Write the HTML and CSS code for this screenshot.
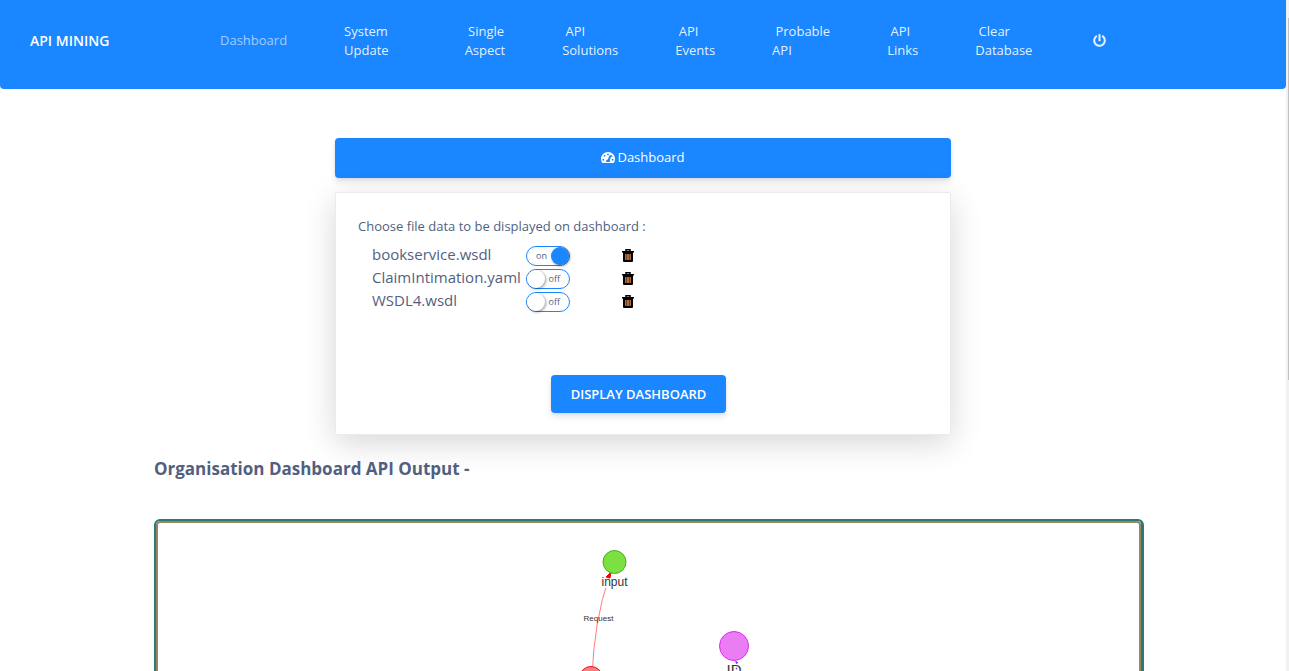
FILE: index.html
```html
<!DOCTYPE html>
<html lang="en">
<head>
<meta charset="utf-8">
<title>API Mining</title>
<link rel="stylesheet" href="styles.css">
</head>
<body>
<div class="page">
  <header class="navbar">
    <a class="brand" href="#">API MINING</a>
    <nav class="nav">
      <a class="nav-link current" href="#">Dashboard</a>
      <a class="nav-link wide" href="#">System<br>Update</a>
      <a class="nav-link" href="#">&nbsp;Single<br>Aspect</a>
      <a class="nav-link" href="#">&nbsp;API<br>Solutions</a>
      <a class="nav-link" href="#">&nbsp;API<br>Events</a>
      <a class="nav-link" href="#">&nbsp;Probable<br>API</a>
      <a class="nav-link" href="#">&nbsp;API<br>Links</a>
      <a class="nav-link" href="#">&nbsp;Clear<br>Database</a>
      <a class="nav-link power" href="#" aria-label="Log out">
        <svg width="13" height="13" viewBox="0 0 512 512"><path fill="currentColor" d="M400 54.100c63 45 104 118.600 104 201.900 0 136.800-110.800 247.700-247.500 248C120 504.300 8.200 393 8 256.400 7.900 173.100 48.900 99.300 111.800 54.200c11.700-8.300 28-4.800 35 7.700L162.600 90c5.900 10.500 3.100 23.800-6.600 31-41.500 30.800-68 79.600-68 134.900-.1 92.300 74.500 168.100 168 168.100 91.600 0 168.600-74.200 168-169.100-.3-51.800-24.700-101.800-68.100-134-9.700-7.200-12.400-20.500-6.500-30.900l15.800-28.100c7-12.400 23.200-16.100 34.800-7.800zM296 264V24c0-13.300-10.700-24-24-24h-32c-13.300 0-24 10.700-24 24v240c0 13.300 10.700 24 24 24h32c13.300 0 24-10.700 24-24z"/></svg>
      </a>
    </nav>
  </header>

  <main>
    <section class="chooser">
      <h1 class="banner">
        <svg width="14" height="13" viewBox="0 0 576 512"><path fill="currentColor" fill-rule="evenodd" d="M288 32C129 32 0 161 0 320c0 53 14 102 39 145 6 10 16 15 28 15h442c12 0 22-5 28-15 25-43 39-92 39-145C576 161 447 32 288 32zM288 88a38 38 0 1 1 0 76 38 38 0 0 1 0-76zM96 310a38 38 0 1 1 0 76 38 38 0 0 1 0-76zM150 150a38 38 0 1 1 0 76 38 38 0 0 1 0-76zM480 310a38 38 0 1 1 0 76 38 38 0 0 1 0-76zM436 160a36 36 0 1 1-24 64l-50 150c10 12 14 24 14 38 0 12-3 20-8 28H222c-6-9-10-20-10-32 0-36 30-64 68-66l76-180c8-20 52-12 44 12z"/></svg>
        Dashboard
      </h1>
      <form class="card">
        <p class="prompt">Choose file data to be displayed on dashboard :</p>
        <ul class="files">
          <li class="file">
            <label class="file-name" for="f1">bookservice.wsdl</label>
            <span class="toggle"><input type="checkbox" id="f1" checked><span class="state">on</span></span>
            <button class="delete" type="button" aria-label="Delete bookservice.wsdl"><svg width="12" height="13" viewBox="0 0 12 13"><path d="M4 2V.75h4V2" fill="none" stroke="#000" stroke-width="1.500"/><path d="M0 2h12v1.500H0z"/><path d="M1 3h10v9q0 1-1 1H2q-1 0-1-1z"/><path d="M3 5h6v6H3z" fill="#b56a35"/><path d="M4.500 5v6M7.500 5v6" stroke="#4a3020" stroke-width=".7"/></svg></button>
          </li>
          <li class="file">
            <label class="file-name" for="f2">ClaimIntimation.yaml</label>
            <span class="toggle"><input type="checkbox" id="f2"><span class="state">off</span></span>
            <button class="delete" type="button" aria-label="Delete ClaimIntimation.yaml"><svg width="12" height="13" viewBox="0 0 12 13"><path d="M4 2V.75h4V2" fill="none" stroke="#000" stroke-width="1.500"/><path d="M0 2h12v1.500H0z"/><path d="M1 3h10v9q0 1-1 1H2q-1 0-1-1z"/><path d="M3 5h6v6H3z" fill="#b56a35"/><path d="M4.500 5v6M7.500 5v6" stroke="#4a3020" stroke-width=".7"/></svg></button>
          </li>
          <li class="file">
            <label class="file-name" for="f3">WSDL4.wsdl</label>
            <span class="toggle"><input type="checkbox" id="f3"><span class="state">off</span></span>
            <button class="delete" type="button" aria-label="Delete WSDL4.wsdl"><svg width="12" height="13" viewBox="0 0 12 13"><path d="M4 2V.75h4V2" fill="none" stroke="#000" stroke-width="1.500"/><path d="M0 2h12v1.500H0z"/><path d="M1 3h10v9q0 1-1 1H2q-1 0-1-1z"/><path d="M3 5h6v6H3z" fill="#b56a35"/><path d="M4.500 5v6M7.500 5v6" stroke="#4a3020" stroke-width=".7"/></svg></button>
          </li>
        </ul>
        <button class="submit" type="button">DISPLAY DASHBOARD</button>
      </form>
    </section>

    <section class="output">
      <h2 class="output-title">Organisation Dashboard API Output -</h2>
      <div class="graph-frame">
        <div class="graph">
          <svg width="982" height="400" viewBox="0 0 982 400">
            <path d="M434 154Q436 98 451 54" fill="none" stroke="#ff7b7b"/>
            <rect x="442" y="53" width="29" height="12" fill="#fff"/>
            <path d="M453 49l-5 5 4 1z" fill="#f00" stroke="#f00"/>
            <circle cx="456.500" cy="39" r="11.500" fill="#7be141" stroke="#4dae1f"/>
            <circle cx="576" cy="123" r="14.500" fill="#eb7df4" stroke="#e129f0"/>
            <circle cx="433" cy="155" r="11.500" fill="#fb7e81" stroke="#fa0a10"/>
            <text class="node-label" x="456.500" y="63">input</text>
            <text class="edge-label" x="440.500" y="98">Request</text>
            <text class="node-label large" x="576" y="152">ID</text>
            <path d="M577.500 138l2.500 1.500-1.500 1.500zM578 145h1v1h-1z" fill="#7b3bf0" stroke="#7b3bf0" stroke-width=".6"/>
          </svg>
        </div>
      </div>
    </section>
  </main>
</div>
<div class="scroll-track"><div class="scroll-thumb"></div></div>
</body>
</html>
```
FILE: styles.css
```css
* { box-sizing: border-box; }

body {
  display: flex;
  height: 100vh;
  margin: 0;
  overflow: hidden;
  background: #fff;
  color: #525f7f;
  font-family: "Open Sans", sans-serif;
  font-size: 13px;
  line-height: 19px;
}

.page {
  flex: 1;
  min-width: 0;
  overflow: hidden;
}

.navbar {
  display: flex;
  align-items: center;
  min-height: 89px;
  padding: 0 30px 8px;
  border-radius: 0 0 4px 4px;
  background: #1a86ff;
}

.brand {
  width: 190px;
  color: #fff;
  font-size: 14px;
  font-weight: 600;
  text-decoration: none;
}

.nav {
  display: flex;
  align-items: center;
  gap: 57px;
}

.nav-link {
  color: rgba(255, 255, 255, .9);
  text-decoration: none;
  white-space: nowrap;
}

.nav-link.current { color: rgba(255, 255, 255, .6); }
.nav-link.wide { padding-right: 19px; }

.nav-link.power {
  display: flex;
  padding-left: 4px;
}

.chooser {
  width: 100%;
  max-width: 616px;
  margin: 49px auto 0;
}

.banner {
  display: flex;
  align-items: center;
  justify-content: center;
  gap: 2px;
  height: 40px;
  margin: 0 0 14px;
  padding-bottom: 2px;
  border-radius: 4px;
  background: #1a86ff;
  box-shadow: 0 4px 6px rgba(50, 50, 93, .11), 0 1px 3px rgba(0, 0, 0, .08);
  color: #fff;
  font-size: 13px;
  font-weight: 400;
}

.card {
  padding: 24px 22px 21px;
  border: 1px solid #ebebec;
  border-radius: 2px;
  background: #fff;
  box-shadow: 0 8px 32px rgba(0, 0, 0, .16);
}

.prompt { margin: 0 0 7px; }

.files {
  margin: 0;
  padding: 0 14px;
  list-style: none;
}

.file {
  display: grid;
  grid-template-columns: 154px 96px auto;
  align-items: end;
  justify-content: start;
  height: 23px;
}

.file-name {
  font-size: 15px;
  line-height: 23px;
}

.toggle {
  position: relative;
  display: flex;
  width: 44px;
  height: 20px;
}

.toggle input {
  width: 44px;
  height: 20px;
  margin: 0;
  border: 1px solid #1a86ff;
  border-radius: 10px;
  appearance: none;
  background: #fff;
}

.toggle input::before {
  content: "";
  display: block;
  width: 18px;
  height: 18px;
  border-radius: 50%;
  background: #fff;
  box-shadow: 1px 1px 3px rgba(0, 0, 0, .4);
}

.toggle input:checked::before {
  margin-left: 24px;
  background: #1a86ff;
}

.state {
  position: absolute;
  top: 0;
  right: 10px;
  font-size: 9px;
  line-height: 20px;
  pointer-events: none;
}

.toggle input:checked + .state {
  right: auto;
  left: 10px;
}

.delete {
  display: flex;
  padding: 0 0 4px;
  border: 0;
  background: none;
}

.submit {
  display: block;
  width: 175px;
  height: 38px;
  margin: 63px auto 0 193px;
  padding: 0;
  border: 0;
  border-radius: 4px;
  background: #1a86ff;
  box-shadow: 0 4px 6px rgba(50, 50, 93, .11), 0 1px 3px rgba(0, 0, 0, .08);
  color: #fff;
  font-family: inherit;
  font-size: 13px;
  font-weight: 600;
}

.output { padding: 22px 142px 0 154px; }

.output-title {
  margin: 0 0 38px;
  font-size: 17px;
  font-weight: 700;
  line-height: 24px;
}

.graph-frame {
  border: 2px solid #2a7a76;
  border-right-width: 3px;
  border-radius: 6px;
}

.graph {
  overflow: hidden;
  border: 2px solid #9a8467;
  border-radius: 4px;
}

.graph svg { display: block; }

.node-label {
  fill: #343434;
  font-family: "Liberation Sans", sans-serif;
  font-size: 12px;
  text-anchor: middle;
}

.node-label.large { font-size: 15px; }

.edge-label {
  fill: #343434;
  font-family: "Liberation Sans", sans-serif;
  font-size: 8px;
  text-anchor: middle;
}

.scroll-track {
  width: 3px;
  padding: 18px 0 0 2px;
  background: #f1f1f1;
}

.scroll-thumb {
  height: 362px;
  background: #c1c1c1;
}
```
